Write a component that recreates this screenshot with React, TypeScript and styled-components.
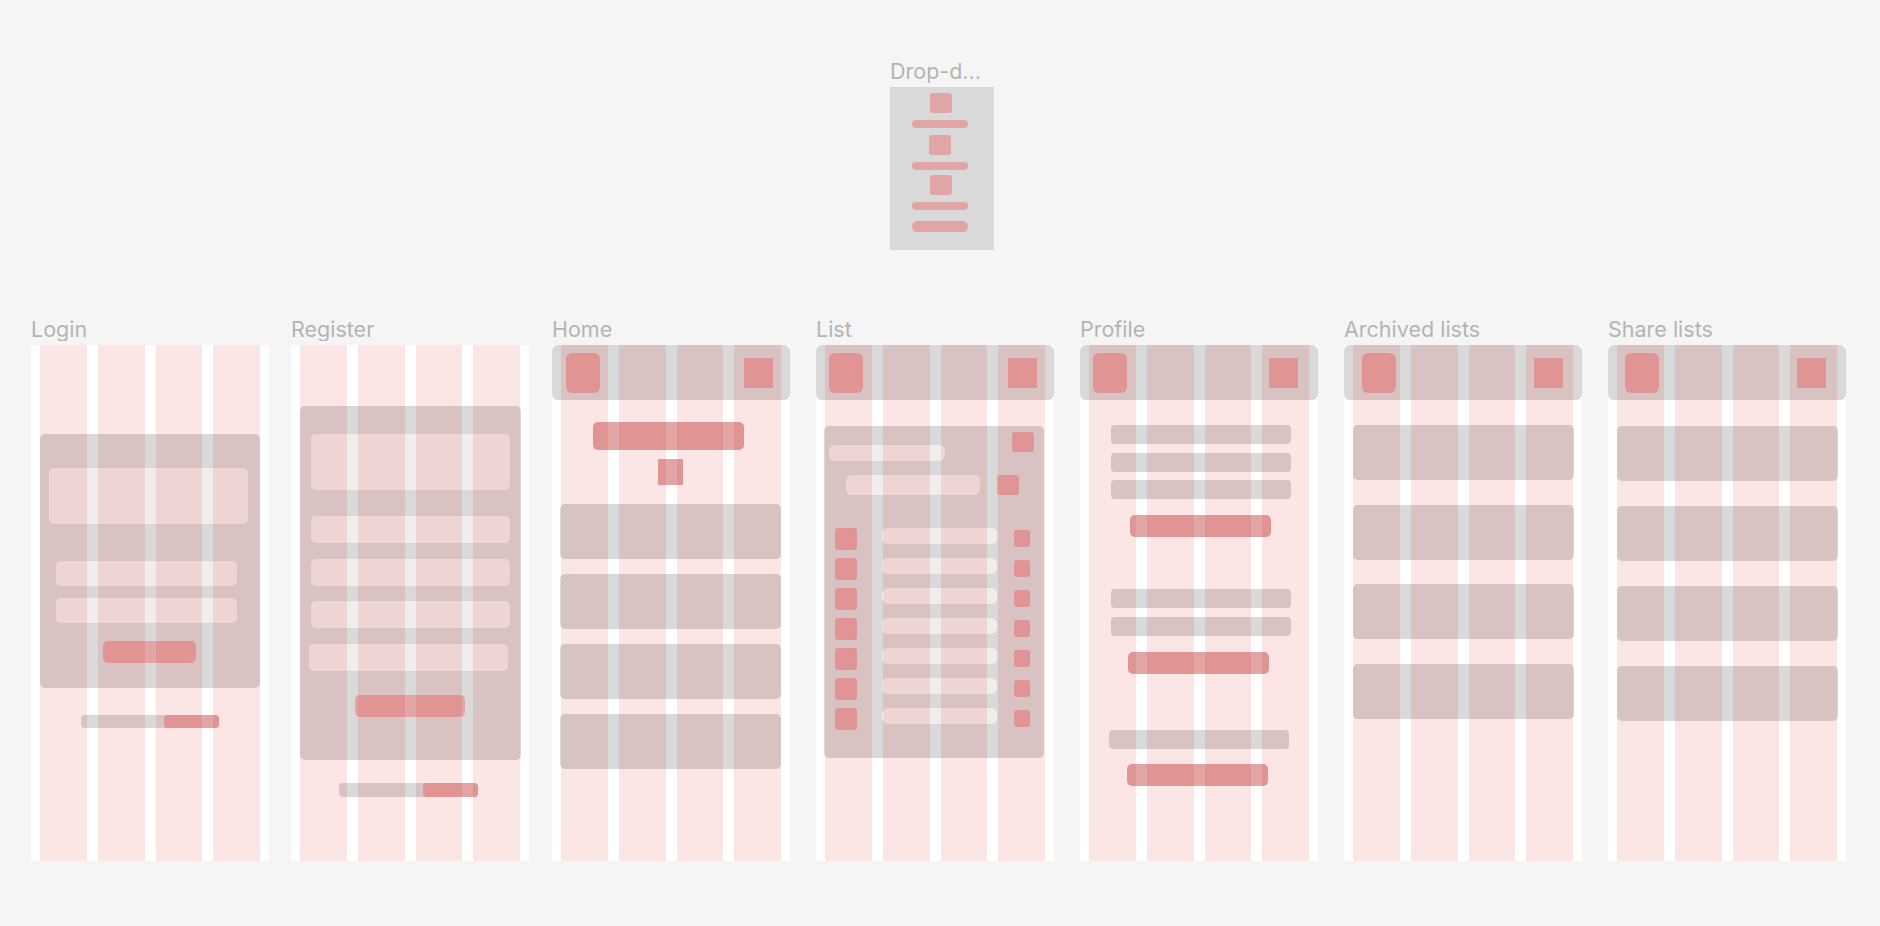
import React from 'react'
import styled, { createGlobalStyle, css } from 'styled-components'

// palette

const GRAY = '#d9d9d9'
const RED = '#e2a5a5'
const LIGHT = '#f2eded'

const GlobalStyle = createGlobalStyle`
  html, body {
    margin: 0;
    padding: 0;
  }
  body {
    background: #f5f5f5;
    font-family: Inter, 'Noto Sans', sans-serif;
  }
`

// shared sizing: width / height, top gap and optional left offset

type Box = { $w: number; $h: number; $x?: number; $mt?: number }

const place = css<Box>`
  flex-shrink: 0;
  width: ${p => p.$w}px;
  height: ${p => p.$h}px;
  margin-top: ${p => p.$mt ?? 0}px;
  ${p => (p.$x !== undefined ? `align-self: flex-start; margin-left: ${p.$x}px;` : '')}
`

const Canvas = styled.div`
  width: 1880px;
  height: 926px;
  overflow: hidden;
  background: #f5f5f5;
`

const DropArea = styled.div`
  padding: 59px 0 0 890px;
`

const FrameLabel = styled.div<{ $w?: number }>`
  width: ${p => (p.$w ? `${p.$w}px` : 'auto')};
  font-size: 21.5px;
  line-height: 24px;
  color: #b4b4b4;
  margin-bottom: 4px;
  white-space: nowrap;
  overflow: hidden;
`

const DropFrame = styled.div`
  width: 104px;
  height: 163px;
  background: ${GRAY};
  display: flex;
  flex-direction: column;
  align-items: center;
`

const Board = styled.div`
  display: flex;
  padding-left: 31px;
  margin-top: 67px;
`

const FrameColumn = styled.div<{ $gap: number }>`
  display: flex;
  flex-direction: column;
  margin-left: ${p => p.$gap}px;
`

const Frame = styled.div`
  position: relative;
  width: 238px;
  height: 516px;
  background: #fff;
  display: flex;
  flex-direction: column;
  align-items: center;
  overflow: hidden;
`

// layout grid drawn over the frame content, like the editor does

const GridOverlay = styled.div`
  position: absolute;
  inset: 0;
  display: grid;
  grid-template-columns: repeat(4, 1fr);
  column-gap: 11px;
  padding: 0 9px;
  pointer-events: none;
`

const GridColumn = styled.div`
  background: rgba(215, 0, 0, 0.1);
`

const Header = styled.div<{ $left: number; $right: number }>`
  align-self: stretch;
  flex-shrink: 0;
  height: 55px;
  background: ${GRAY};
  border-radius: 6px;
  display: flex;
  align-items: center;
  justify-content: space-between;
  padding: 0 ${p => p.$right}px 0 ${p => p.$left}px;
`

const MenuButton = styled.div`
  width: 34px;
  height: 40px;
  border-radius: 6px;
  background: ${RED};
`

const HeaderIcon = styled.div`
  width: 29px;
  height: 30px;
  background: ${RED};
`

const Card = styled.div<Box>`
  ${place};
  background: ${GRAY};
  border-radius: 5px;
  display: flex;
  flex-direction: column;
  align-items: center;
`

const Field = styled.div<Box>`
  ${place};
  background: ${LIGHT};
  border-radius: 5px;
`

const Button = styled.div<Box>`
  ${place};
  background: ${RED};
  border-radius: 5px;
`

const Line = styled.div<Box>`
  ${place};
  background: ${GRAY};
  border-radius: 4px;
`

const Pill = styled.div<Box>`
  ${place};
  background: ${LIGHT};
  border-radius: 6px;
`

const Badge = styled.div<Box & { $r?: number }>`
  ${place};
  background: ${RED};
  border-radius: ${p => p.$r ?? 0}px;
`

const Rule = styled.div<Box>`
  ${place};
  background: ${RED};
  border-radius: 999px;
`

const LinkBar = styled.div<Box>`
  ${place};
  background: ${GRAY};
  border-radius: 4px;
  display: flex;
  justify-content: flex-end;
`

const LinkAccent = styled.div<{ $w: number }>`
  width: ${p => p.$w}px;
  background: ${RED};
  border-radius: 4px;
`

const Row = styled.div<{ $mt: number }>`
  align-self: stretch;
  display: flex;
  align-items: flex-start;
  margin-top: ${p => p.$mt}px;
`

//

const Grid = () => (
  <GridOverlay>
    <GridColumn />
    <GridColumn />
    <GridColumn />
    <GridColumn />
  </GridOverlay>
)

const TopBar = ({ left, right }: { left: number; right: number }) => (
  <Header $left={left} $right={right}>
    <MenuButton />
    <HeaderIcon />
  </Header>
)

const Login = () => (
  <>
    <Card $x={9} $mt={89} $w={220} $h={254}>
      <Field $x={9} $mt={34} $w={199} $h={56} />
      <Field $x={16} $mt={37} $w={181} $h={25} />
      <Field $x={16} $mt={12} $w={181} $h={25} />
      <Button $x={63} $mt={18} $w={93} $h={22} />
    </Card>
    <LinkBar $x={50} $mt={27} $w={138} $h={13}>
      <LinkAccent $w={55} />
    </LinkBar>
  </>
)

const Register = () => (
  <>
    <Card $x={9} $mt={61} $w={221} $h={354}>
      <Field $x={11} $mt={28} $w={199} $h={56} />
      <Field $x={11} $mt={26} $w={199} $h={27} />
      <Field $x={11} $mt={16} $w={199} $h={27} />
      <Field $x={11} $mt={15} $w={199} $h={27} />
      <Field $x={9} $mt={16} $w={199} $h={27} />
      <Button $x={55} $mt={24} $w={110} $h={22} />
    </Card>
    <LinkBar $x={48} $mt={23} $w={139} $h={14}>
      <LinkAccent $w={55} />
    </LinkBar>
  </>
)

const Home = () => (
  <>
    <TopBar left={14} right={17} />
    <Button $x={41} $mt={22} $w={151} $h={28} />
    <Badge $x={106} $mt={9} $w={25} $h={26} />
    <Card $x={8} $mt={19} $w={221} $h={55} />
    <Card $x={8} $mt={15} $w={221} $h={55} />
    <Card $x={8} $mt={15} $w={221} $h={55} />
    <Card $x={8} $mt={15} $w={221} $h={55} />
  </>
)

const listRows = [0, 1, 2, 3, 4, 5, 6]

const List = () => (
  <>
    <TopBar left={13} right={17} />
    <Card $x={8} $mt={26} $w={220} $h={332}>
      <Row $mt={6}>
        <Pill $x={5} $mt={13} $w={116} $h={16} />
        <Badge $x={67} $w={22} $h={20} $r={3} />
      </Row>
      <Row $mt={14}>
        <Pill $x={22} $w={134} $h={20} />
        <Badge $x={17} $w={22} $h={20} $r={3} />
      </Row>
      {listRows.map(i => (
        <Row key={i} $mt={i === 0 ? 33 : 8}>
          <Badge $x={11} $w={22} $h={22} $r={3} />
          <Pill $x={25} $w={115} $h={16} />
          <Badge $x={17} $mt={2} $w={16} $h={17} $r={3} />
        </Row>
      ))}
    </Card>
  </>
)

const Profile = () => (
  <>
    <TopBar left={13} right={20} />
    <Line $x={31} $mt={25} $w={180} $h={19} />
    <Line $x={31} $mt={9} $w={180} $h={19} />
    <Line $x={31} $mt={8} $w={180} $h={19} />
    <Button $x={50} $mt={16} $w={141} $h={22} />
    <Line $x={31} $mt={52} $w={180} $h={19} />
    <Line $x={31} $mt={9} $w={180} $h={19} />
    <Button $x={48} $mt={16} $w={141} $h={22} />
    <Line $x={29} $mt={56} $w={180} $h={19} />
    <Button $x={47} $mt={15} $w={141} $h={22} />
  </>
)

const Archived = () => (
  <>
    <TopBar left={18} right={19} />
    <Card $x={9} $mt={25} $w={221} $h={55} />
    <Card $x={9} $mt={25} $w={221} $h={55} />
    <Card $x={9} $mt={24} $w={221} $h={55} />
    <Card $x={9} $mt={25} $w={221} $h={55} />
  </>
)

const Share = () => (
  <>
    <TopBar left={17} right={20} />
    <Card $x={9} $mt={26} $w={221} $h={55} />
    <Card $x={9} $mt={25} $w={221} $h={55} />
    <Card $x={9} $mt={25} $w={221} $h={55} />
    <Card $x={9} $mt={25} $w={221} $h={55} />
  </>
)

const screens = [
  { title: 'Login', gap: 0, Body: Login },
  { title: 'Register', gap: 22, Body: Register },
  { title: 'Home', gap: 23, Body: Home },
  { title: 'List', gap: 26, Body: List },
  { title: 'Profile', gap: 26, Body: Profile },
  { title: 'Archived lists', gap: 26, Body: Archived },
  { title: 'Share lists', gap: 26, Body: Share },
]

const App = () => {
  return (
    <Canvas>
      <GlobalStyle />

      <DropArea>
        <FrameLabel $w={104}>Drop-d...</FrameLabel>
        <DropFrame>
          <Badge $x={40} $mt={6} $w={22} $h={20} $r={3} />
          <Rule $x={22} $mt={7} $w={56} $h={8} />
          <Badge $x={39} $mt={7} $w={22} $h={20} $r={3} />
          <Rule $x={22} $mt={7} $w={56} $h={8} />
          <Badge $x={40} $mt={5} $w={22} $h={20} $r={3} />
          <Rule $x={22} $mt={7} $w={56} $h={8} />
          <Rule $x={22} $mt={11} $w={56} $h={11} />
        </DropFrame>
      </DropArea>

      <Board>
        {screens.map(({ title, gap, Body }) => (
          <FrameColumn key={title} $gap={gap}>
            <FrameLabel>{title}</FrameLabel>
            <Frame>
              <Body />
              <Grid />
            </Frame>
          </FrameColumn>
        ))}
      </Board>
    </Canvas>
  )
}

export default App
